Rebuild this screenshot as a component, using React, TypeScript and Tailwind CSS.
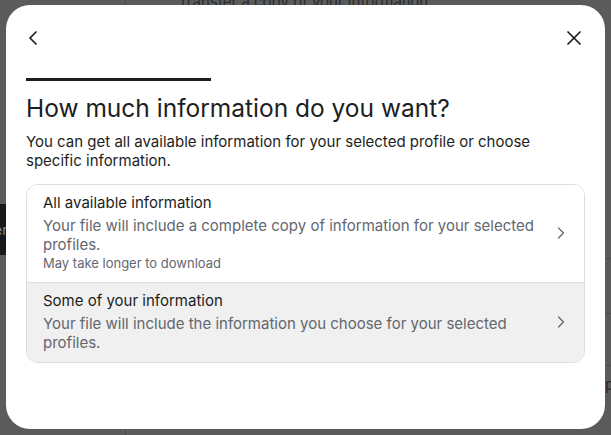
import { ChevronLeft, ChevronRight, X } from "lucide-react";

const options = [
  {
    title: "All available information",
    desc: "Your file will include a complete copy of information for your selected profiles.",
    note: "May take longer to download",
    hover: false,
  },
  {
    title: "Some of your information",
    desc: "Your file will include the information you choose for your selected profiles.",
    note: "",
    hover: true,
  },
];

const App = () => {
  return (
    <div className="relative w-[611px] h-[435px] overflow-hidden bg-[#5b5b5b] font-['Inter','Liberation_Sans',sans-serif]">
      {/* page behind the overlay */}
      <div className="absolute left-[125px] top-0 h-full w-px bg-[#4a4a4a]" />
      <div className="absolute left-[178px] top-[-9px] text-[15px] text-[#2b2b2b]">Transfer a copy of your information</div>
      <div className="absolute left-0 top-[204px] h-[51px] w-[8px] bg-[#17191b] text-[14px] leading-[51px] text-[#8a8a8a]">
        <span className="ml-[-6px]">er</span>
      </div>
      <div className="absolute left-[590px] top-[258px] h-px w-[30px] bg-[#4d4d4d]" />
      <div className="absolute left-[590px] top-[313px] h-px w-[30px] bg-[#4d4d4d]" />
      <div className="absolute left-[590px] top-[365px] h-px w-[30px] bg-[#4d4d4d]" />
      <div className="absolute left-[605px] top-[374px] text-[15px] text-[#2b2b2b]">p</div>

      {/* dialog */}
      <div className="absolute left-[6px] top-[5px] w-[599px] h-[424px] rounded-[24px] bg-white px-[20px] text-[#1c1e21]">
        <div className="flex items-center justify-between pt-[21px] ml-[-2px] mr-[-1px]">
          <ChevronLeft size={24} strokeWidth={1.75} className="text-[#1c1e21] -ml-[3px]" />
          <X size={24} strokeWidth={1.75} className="text-[#1c1e21]" />
        </div>
        <div className="mt-[28px] h-[3px] w-[185px] bg-[#1c1e21]" />
        <h1 className="mt-[12px] text-[24.5px] leading-[30px] font-normal">How much information do you want?</h1>
        <p className="mt-[9px] text-[15px] leading-[19px] text-[#1c1e21]">
          You can get all available information for your selected profile or choose specific information.
        </p>
        <div className="mt-[14px] overflow-hidden rounded-[12px] border border-[#dadde1]">
          {options.map((o, i) => (
            <div
              key={i}
              className={`flex items-center pl-[16px] pr-[13px] pt-[8px] pb-[10px] ${o.hover ? "bg-[#f0f0f0]" : "bg-white"} ${i > 0 ? "border-t border-[#dadde1]" : ""}`}
            >
              <div className="flex-1 pr-[6px]">
                <div className="mb-[3px] text-[15px] leading-[20px] text-[#1c1e21]">{o.title}</div>
                <div className="text-[15px] leading-[19px] text-[#63676f]">{o.desc}</div>
                {o.note && <div className="mt-[1px] text-[13px] leading-[17px] text-[#63676f]">{o.note}</div>}
              </div>
              <ChevronRight size={20} strokeWidth={1.5} className="text-[#63676f]" />
            </div>
          ))}
        </div>
      </div>
    </div>
  );
};

export default App;
